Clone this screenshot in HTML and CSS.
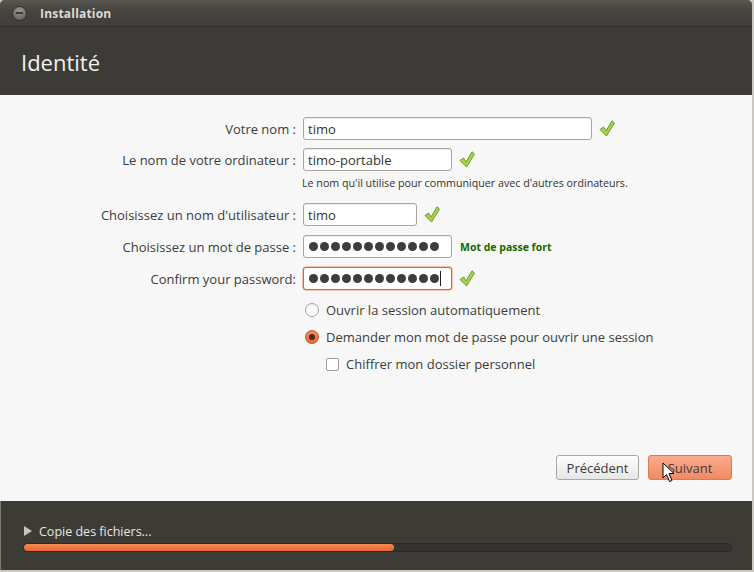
FILE: index.html
```html
<!DOCTYPE html>
<html lang="fr">
<head>
<meta charset="utf-8">
<title>Installation</title>
<link rel="stylesheet" href="styles.css">
</head>
<body>
<div class="window">
  <div class="titlebar">
    <span class="min-btn"><span class="min-dash"></span></span>
    <span class="title">Installation</span>
  </div>
  <div class="header"><h1>Identité</h1></div>
  <div class="content">
    <div class="form">
      <div class="row r1">
        <label class="lbl">Votre nom :</label>
        <div class="input w288"><span class="val">timo</span></div>
        <svg class="check" viewBox="0 0 16 17" width="16" height="17"><path d="M1 9.5 L4.5 7 L7 11 L13 0.8 L15.5 3 L7.5 16 Z" fill="#a7cf52" stroke="#6f9e22" stroke-width="1" stroke-linejoin="round"/></svg>
      </div>
      <div class="row r2">
        <label class="lbl">Le nom de votre ordinateur :</label>
        <div class="input w148"><span class="val">timo-portable</span></div>
        <svg class="check" viewBox="0 0 16 17" width="16" height="17"><path d="M1 9.5 L4.5 7 L7 11 L13 0.8 L15.5 3 L7.5 16 Z" fill="#a7cf52" stroke="#6f9e22" stroke-width="1" stroke-linejoin="round"/></svg>
      </div>
      <div class="hint">Le nom qu'il utilise pour communiquer avec d'autres ordinateurs.</div>
      <div class="row r3">
        <label class="lbl">Choisissez un nom d'utilisateur :</label>
        <div class="input w113"><span class="val">timo</span></div>
        <svg class="check" viewBox="0 0 16 17" width="16" height="17"><path d="M1 9.5 L4.5 7 L7 11 L13 0.8 L15.5 3 L7.5 16 Z" fill="#a7cf52" stroke="#6f9e22" stroke-width="1" stroke-linejoin="round"/></svg>
      </div>
      <div class="row r4">
        <label class="lbl">Choisissez un mot de passe :</label>
        <div class="input w148 pw">
          <span class="dots"><i></i><i></i><i></i><i></i><i></i><i></i><i></i><i></i><i></i><i></i><i></i><i></i></span>
        </div>
        <span class="strength">Mot de passe fort</span>
      </div>
      <div class="row r5">
        <label class="lbl">Confirm your password:</label>
        <div class="input w148 pw focus">
          <span class="dots"><i></i><i></i><i></i><i></i><i></i><i></i><i></i><i></i><i></i><i></i><i></i><i></i></span><span class="caret"></span>
        </div>
        <svg class="check" viewBox="0 0 16 17" width="16" height="17"><path d="M1 9.5 L4.5 7 L7 11 L13 0.8 L15.5 3 L7.5 16 Z" fill="#a7cf52" stroke="#6f9e22" stroke-width="1" stroke-linejoin="round"/></svg>
      </div>
      <div class="opt o1"><span class="radio"></span><span>Ouvrir la session automatiquement</span></div>
      <div class="opt o2"><span class="radio on"><span class="dot"></span></span><span>Demander mon mot de passe pour ouvrir une session</span></div>
      <div class="opt o3"><span class="checkbox"></span><span>Chiffrer mon dossier personnel</span></div>
    </div>
    <div class="buttons">
      <button class="btn prev">Précédent</button>
      <button class="btn next">Suivant</button>
    </div>
  </div>
  <div class="footer">
    <div class="status"><span class="tri"></span><span>Copie des fichiers...</span></div>
    <div class="track"><div class="fill" style="width:370px"></div></div>
  </div>
  <svg class="cursor" width="13" height="21" viewBox="0 0 13 21"><path d="M1 1 L1 16 L4.5 12.5 L7.5 19.5 L10 18.5 L7 11.5 L12 11.5 Z" fill="#fff" stroke="#000" stroke-width="1" stroke-linejoin="round"/></svg>
</div>
</body>
</html>
```

FILE: styles.css
```css
html, body {
  margin: 0;
  padding: 0;
  background: #c9c9c2;
}
body {
  width: 754px;
  height: 572px;
  overflow: hidden;
  font-family: "Open Sans", "DejaVu Sans", sans-serif;
}
.window {
  position: relative;
  width: 752px;
  height: 570px;
  display: flex;
  flex-direction: column;
  border-radius: 5px 5px 0 0;
  overflow: hidden;
  background: #3c3b37;
}
.titlebar {
  height: 27px;
  flex: none;
  display: flex;
  align-items: center;
  background: linear-gradient(#5a5752, #46443f 40%, #3f3e39);
  border-bottom: 1px solid #2d2c29;
  box-sizing: border-box;
}
.min-btn {
  width: 15px;
  height: 15px;
  margin-left: 12px;
  border-radius: 50%;
  background: radial-gradient(circle at 50% 30%, #9b9892, #6c6a65 70%);
  border: 1px solid #2f2e2b;
  box-sizing: border-box;
  display: flex;
  align-items: center;
  justify-content: center;
}
.min-dash {
  width: 7px;
  height: 2px;
  background: #3a3935;
}
.title {
  margin-left: 13px;
  color: #dfdbd2;
  font-weight: bold;
  font-size: 12px;
  letter-spacing: 0.2px;
}
.header {
  height: 68px;
  flex: none;
  background: #3c3b37;
  box-sizing: border-box;
  padding: 21px 0 0 21px;
}
.header h1 {
  margin: 0;
  font-weight: normal;
  font-size: 22px;
  line-height: 28px;
  color: #f2f1ef;
}
.content {
  height: 406px;
  flex: none;
  background: #f7f7f7;
  display: flex;
  flex-direction: column;
  box-sizing: border-box;
  padding-top: 22px;
}
.form {
  display: flex;
  flex-direction: column;
}
.row {
  display: flex;
  align-items: center;
  height: 23px;
}
.lbl {
  width: 296px;
  text-align: right;
  font-size: 13px;
  color: #3c3c3c;
  margin-right: 7px;
}
.input {
  height: 23px;
  box-sizing: border-box;
  border: 1px solid #aaa69e;
  border-radius: 3px;
  background: #fff;
  box-shadow: inset 0 1px 1px rgba(0,0,0,0.08);
  display: flex;
  align-items: center;
  padding-left: 4px;
  font-size: 13px;
  color: #333;
}
.w288 { width: 289px; }
.w148 { width: 149px; }
.w113 { width: 114px; }
.check { margin-left: 7px; }
.r1 { margin-bottom: 8px; }
.hint {
  margin: 5px 0 0 302px;
  font-size: 10.7px;
  height: 14px;
  line-height: 14px;
  color: #333;
  margin-bottom: 13px;
}
.r3, .r4 { margin-bottom: 9px; }
.dots {
  display: flex;
  gap: 2px;
  padding-left: 1px;
}
.dots i {
  width: 9px;
  height: 9px;
  border-radius: 50%;
  background: #3d3d3d;
}
.focus {
  border-color: #e0642a;
  box-shadow: 0 0 0 0.5px #f19068;
}
.caret {
  width: 1px;
  height: 15px;
  background: #222;
  margin-left: 1px;
}
.strength {
  margin-left: 8px;
  color: #146a00;
  font-weight: bold;
  font-size: 10.5px;
}
.opt {
  display: flex;
  align-items: center;
  height: 18px;
  font-size: 13px;
  color: #3c3c3c;
}
.o1 { margin: 11px 0 0 305px; }
.o2 { margin: 9px 0 0 305px; }
.o3 { margin: 9px 0 0 326px; }
.radio {
  width: 14px;
  height: 14px;
  box-sizing: border-box;
  border-radius: 50%;
  border: 1px solid #a09e9a;
  background: linear-gradient(#f4f4f4, #ffffff);
  margin-right: 7px;
  display: flex;
  align-items: center;
  justify-content: center;
}
.radio.on {
  border-color: #c4522a;
  background: linear-gradient(#f58a5e, #e8693a);
}
.radio .dot {
  width: 6px;
  height: 6px;
  border-radius: 50%;
  background: #4a2a1f;
}
.checkbox {
  width: 13px;
  height: 13px;
  box-sizing: border-box;
  border: 1px solid #a09e9a;
  border-radius: 2px;
  background: #fff;
  margin-right: 7px;
}
.buttons {
  margin-top: auto;
  margin-bottom: 21px;
  display: flex;
  justify-content: flex-end;
  gap: 9px;
  padding-right: 20px;
}
.btn {
  height: 25px;
  box-sizing: border-box;
  border-radius: 3px;
  font-family: "Open Sans", "DejaVu Sans", sans-serif;
  font-size: 13px;
  color: #3c3c3c;
  padding: 0;
}
.prev {
  width: 83px;
  border: 1px solid #aaa8a2;
  background: linear-gradient(#fdfdfd, #e6e6e4);
}
.next {
  width: 84px;
  border: 1px solid #d97a58;
  background: linear-gradient(#fbab8c, #f18a64);
}
.footer {
  flex: 1;
  background: #3c3b35;
  box-sizing: border-box;
  padding: 21px 20px 0 22px;
  border-left: 1px solid #7c7b75;
}
.status {
  display: flex;
  align-items: center;
  height: 18px;
  color: #e8e6e0;
  font-size: 12.5px;
}
.tri {
  width: 0;
  height: 0;
  border-left: 8px solid #c6c4bf;
  border-top: 5px solid transparent;
  border-bottom: 5px solid transparent;
  margin: 0 7px 0 1px;
}
.track {
  margin-top: 3px;
  height: 9px;
  box-sizing: border-box;
  border-radius: 5px;
  background: #34332f;
  border: 1px solid #2b2a26;
}
.fill {
  height: 7px;
  border-radius: 4px;
  background: linear-gradient(#f58a55, #e6672f);
}
.cursor {
  position: absolute;
  left: 662px;
  top: 462px;
}
```
